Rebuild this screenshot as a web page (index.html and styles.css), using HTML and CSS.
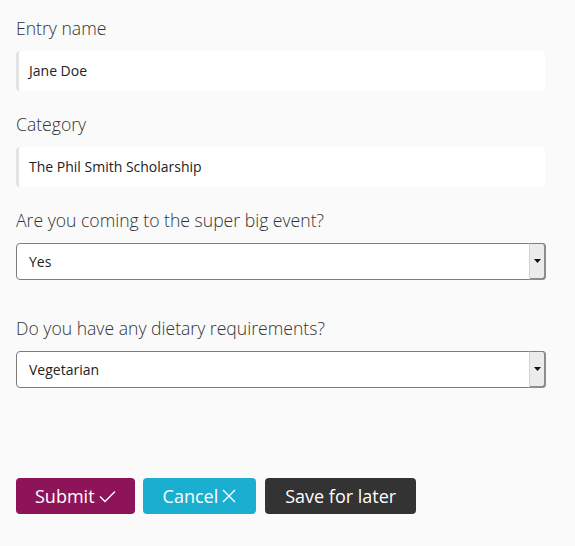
FILE: index.html
```html
<!DOCTYPE html>
<html lang="en">
<head>
<meta charset="utf-8">
<title>Entry form</title>
<link rel="stylesheet" href="styles.css">
</head>
<body>
<form class="form">
  <div class="field">
    <label class="label">Entry name</label>
    <div class="input">Jane Doe</div>
  </div>
  <div class="field">
    <label class="label">Category</label>
    <div class="input">The Phil Smith Scholarship</div>
  </div>
  <div class="field field-select">
    <label class="label">Are you coming to the super big event?</label>
    <div class="select">
      <span class="select-value">Yes</span>
      <span class="select-btn"><svg width="7" height="4" viewBox="0 0 7 4"><path d="M0 0H7L3.5 4Z" fill="#111"/></svg></span>
    </div>
  </div>
  <div class="field field-select">
    <label class="label">Do you have any dietary requirements?</label>
    <div class="select">
      <span class="select-value">Vegetarian</span>
      <span class="select-btn"><svg width="7" height="4" viewBox="0 0 7 4"><path d="M0 0H7L3.5 4Z" fill="#111"/></svg></span>
    </div>
  </div>
  <div class="actions">
    <button type="button" class="btn btn-submit">Submit<svg class="ico" width="17" height="13" viewBox="0 0 17 13"><path d="M1 6.5L6 11.5L16 1.5" fill="none" stroke="#fff" stroke-width="1.4"/></svg></button>
    <button type="button" class="btn btn-cancel">Cancel<svg class="ico" width="14" height="14" viewBox="0 0 14 14"><path d="M1 1L13 13M13 1L1 13" fill="none" stroke="#fff" stroke-width="1.4"/></svg></button>
    <button type="button" class="btn btn-save">Save for later</button>
  </div>
</form>
</body>
</html>
```
FILE: styles.css
```css
* { box-sizing: border-box; }
html, body { margin: 0; padding: 0; }
body {
  background: #fafafa;
  font-family: "Open Sans", "Liberation Sans", sans-serif;
  color: #333;
}
.form {
  width: 546px;
  padding: 16px 0 0 16px;
  display: flex;
  flex-direction: column;
}
.field {
  display: flex;
  flex-direction: column;
  margin-bottom: 21px;
}
.field-select { margin-bottom: 36px; }
.label {
  font-size: 17.6px;
  font-weight: 300;
  line-height: 24px;
  color: #333;
  margin-bottom: 11px;
}
.input {
  width: 529px;
  height: 40px;
  background: #fff;
  border-left: 3px solid #e3e3e3;
  border-radius: 4px;
  padding-left: 10px;
  font-size: 14px;
  line-height: 40px;
  color: #222;
}
.select {
  position: relative;
  width: 530px;
  height: 37px;
  background: #fff;
  border: 1px solid #7d7d7d;
  border-radius: 4px;
  padding-left: 12px;
  font-size: 14px;
  line-height: 35px;
  color: #222;
}
.select-btn {
  position: absolute;
  top: -1px;
  right: -1px;
  bottom: -1px;
  width: 17px;
  background: #ececec;
  border: 1px solid #7d7d7d;
  border-left: 1px solid #d4d4d4;
  border-right: 2px solid #8c8c8c;
  border-bottom: 2px solid #8c8c8c;
  border-radius: 0 4px 4px 0;
  display: flex;
  align-items: center;
  justify-content: center;
}
.actions {
  display: flex;
  gap: 8px;
  margin-top: 54px;
}
.btn {
  height: 36px;
  border: none;
  border-radius: 4px;
  padding: 0 20px;
  font-family: "Open Sans", "Liberation Sans", sans-serif;
  font-size: 18px;
  color: #fff;
  display: flex;
  align-items: center;
  gap: 4px;
}
.btn-submit { background: #8e1459; padding: 0 19px; }
.btn-cancel { background: #1aafd0; }
.btn-save { background: #333; margin-left: 1px; }
.ico { display: block; }
```
